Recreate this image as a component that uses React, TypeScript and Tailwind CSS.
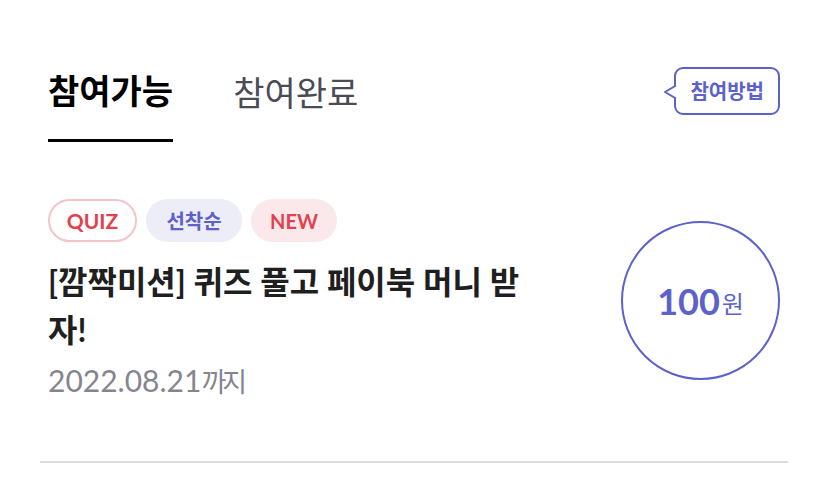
export default function App() {
  const font = { fontFamily: 'Lato, "Noto Sans CJK KR", sans-serif' }
  return (
    <div className="min-h-screen bg-white" style={font}>
      {/* Tabs */}
      <div className="flex items-start justify-between px-12 pt-[67px]">
        <div className="flex gap-[60px]">
          <button className="border-b-[3px] border-black pb-[24px] text-[34px] leading-[48px] font-bold text-black">
            참여가능
          </button>
          <button className="pb-[24px] text-[34px] leading-[48px] text-[#4b4b55]">참여완료</button>
        </div>
        <div className="relative">
          <div className="h-[48px] rounded-[9px] border-2 border-[#5c62c9] bg-white px-[14px] text-[20px] leading-[44px] font-bold text-[#5c62c9]">
            참여방법
          </div>
          <svg className="absolute left-[-11px] top-[17px]" width="14" height="16" viewBox="0 0 14 16">
            <path d="M13 1.5 L2 8 L13 14.5" fill="white" stroke="#5c62c9" strokeWidth="2" strokeLinejoin="round" />
          </svg>
        </div>
      </div>

      {/* Mission item */}
      <div className="flex items-center justify-between px-12 pt-[57px]">
        <div className="w-[490px]">
          <div className="flex gap-[9px]">
            <span className="flex h-[43px] w-[89px] items-center justify-center rounded-full border-2 border-[#f6c3c8] text-[21px] font-bold text-[#e4414f]">
              QUIZ
            </span>
            <span className="flex h-[43px] w-[96px] items-center justify-center rounded-full bg-[#ededf8] text-[20px] font-bold text-[#5c62c9]">
              선착순
            </span>
            <span className="flex h-[43px] w-[86px] items-center justify-center rounded-full bg-[#fbe8ea] text-[20px] font-bold text-[#e4414f]">
              NEW
            </span>
          </div>
          <p className="mt-[16px] text-[32px] leading-[48px] font-bold text-[#1f1f1f]">
            [깜짝미션] 퀴즈 풀고 페이북 머니 받자!
          </p>
          <p className="mt-[6px] text-[30px] leading-[40px] text-[#85858f]">
            2022.08.21<span className="text-[27px] tracking-[-4px]">까지</span>
          </p>
        </div>
        <div className="flex h-[159px] w-[159px] items-center justify-center rounded-full border-2 border-[#5c62c9] text-[#5c62c9]">
          <span className="text-[36px] font-bold">100</span>
          <span className="ml-[2px] mt-[6px] text-[24px]">원</span>
        </div>
      </div>

      <div className="mx-10 mt-[59px] h-[2px] bg-[#dcdce0]" />
    </div>
  )
}
